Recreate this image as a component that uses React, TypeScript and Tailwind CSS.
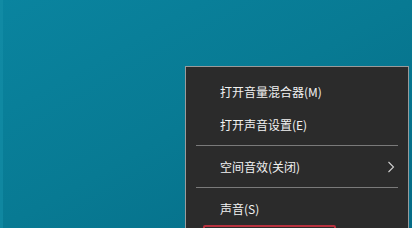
import React from 'react'

const cjk = { fontFamily: '"Microsoft YaHei", "Noto Sans CJK SC", sans-serif' }

function Item({ label, sub }: { label: string; sub?: boolean }) {
    return (
        <div className="h-[33px] flex items-center pl-[34px] pr-[12px] text-[12px] text-[#f2f2f2]">
            <span className="flex-1">{label}</span>
            {sub && (
                <svg width="8" height="12" viewBox="0 0 8 12" className="mr-[1px]">
                    <path d="M1.5 1 L6.5 6 L1.5 11" fill="none" stroke="#d0d0d0" strokeWidth="1.1" />
                </svg>
            )}
        </div>
    )
}

function Separator() {
    return (
        <div className="h-[9px] flex items-center px-[10px]">
            <div className="h-px w-full bg-[#7a7a7a]" />
        </div>
    )
}

export default function App() {
    return (
        <div className="relative w-[412px] h-[228px] overflow-hidden bg-gradient-to-br from-[#0a849f] via-[#087a93] to-[#056c87]" style={cjk}>
            <div className="absolute left-0 top-0 h-full w-[3px] bg-[#1690a8]/60" />
            <div className="absolute left-[185px] top-[66px] w-[224px] h-[200px] bg-[#2b2b2b] border border-[#9a9a9a] pt-[8px]">
                <Item label="打开音量混合器(M)" />
                <Item label="打开声音设置(E)" />
                <Separator />
                <Item label="空间音效(关闭)" sub />
                <Separator />
                <Item label="声音(S)" />
                <div className="ml-[17px] w-[133px] h-[20px] border-2 border-[#b8323f] rounded-[2px]" />
            </div>
        </div>
    )
}
